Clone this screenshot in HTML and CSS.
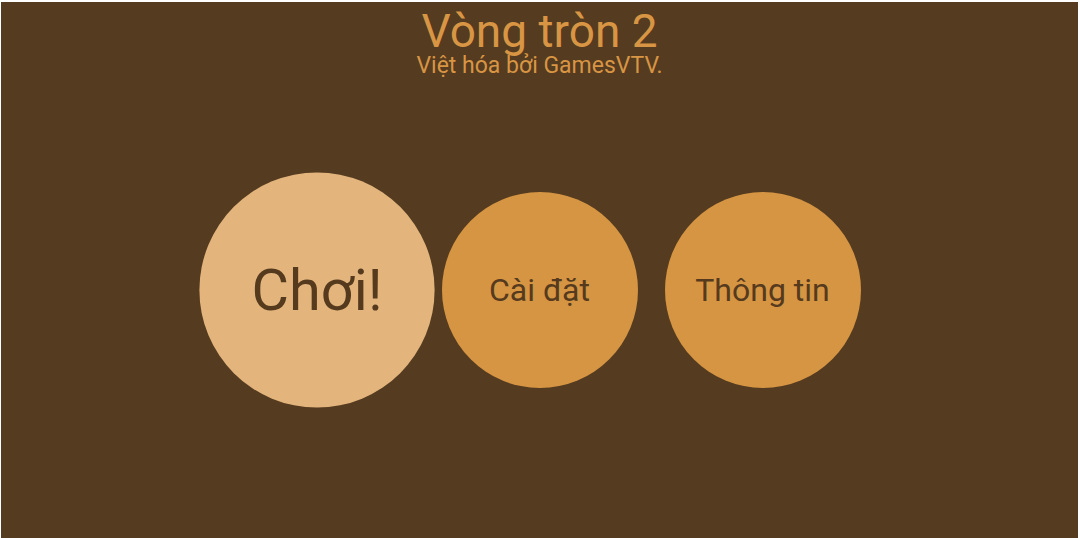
FILE: index.html
```html
<!DOCTYPE html>
<html lang="vi">
<head>
<meta charset="utf-8">
<title>Vòng tròn 2</title>
<link rel="stylesheet" href="styles.css">
</head>
<body>
<div class="screen">
  <header class="header">
    <h1 class="title">Vòng tròn 2</h1>
    <p class="subtitle">Việt hóa bởi GamesVTV.</p>
  </header>
  <nav class="menu">
    <div class="cell"><button class="circle circle-play">Chơi!</button></div>
    <div class="cell"><button class="circle">Cài đặt</button></div>
    <div class="cell"><button class="circle">Thông tin</button></div>
  </nav>
</div>
</body>
</html>
```
FILE: styles.css
```css
html, body {
  margin: 0;
  padding: 0;
  height: 100%;
  background: #ffffff;
}
body {
  padding: 2px 2px 0 1px;
  box-sizing: border-box;
}
.screen {
  height: 100%;
  background: #553b1f;
  font-family: Roboto, "Liberation Sans", sans-serif;
  display: flex;
  flex-direction: column;
  align-items: center;
}
.header {
  text-align: center;
  color: #d89544;
  padding-top: 4px;
}
.title {
  margin: 0;
  font-size: 46px;
  font-weight: 400;
  line-height: 50px;
}
.subtitle {
  margin: 0;
  font-size: 23px;
  line-height: 24px;
  margin-top: -2px;
}
.menu {
  display: flex;
  margin-top: 114px;
}
.cell {
  width: 223px;
  display: flex;
  justify-content: center;
}
.circle {
  width: 196px;
  height: 196px;
  border-radius: 50%;
  border: none;
  padding: 0;
  background: #d69543;
  color: #553a1d;
  font-family: Roboto, "Liberation Sans", sans-serif;
  font-size: 32px;
  cursor: pointer;
}
.circle-play {
  background: #e3b57d;
  transform: scale(1.2);
  font-size: 48px;
}
```
